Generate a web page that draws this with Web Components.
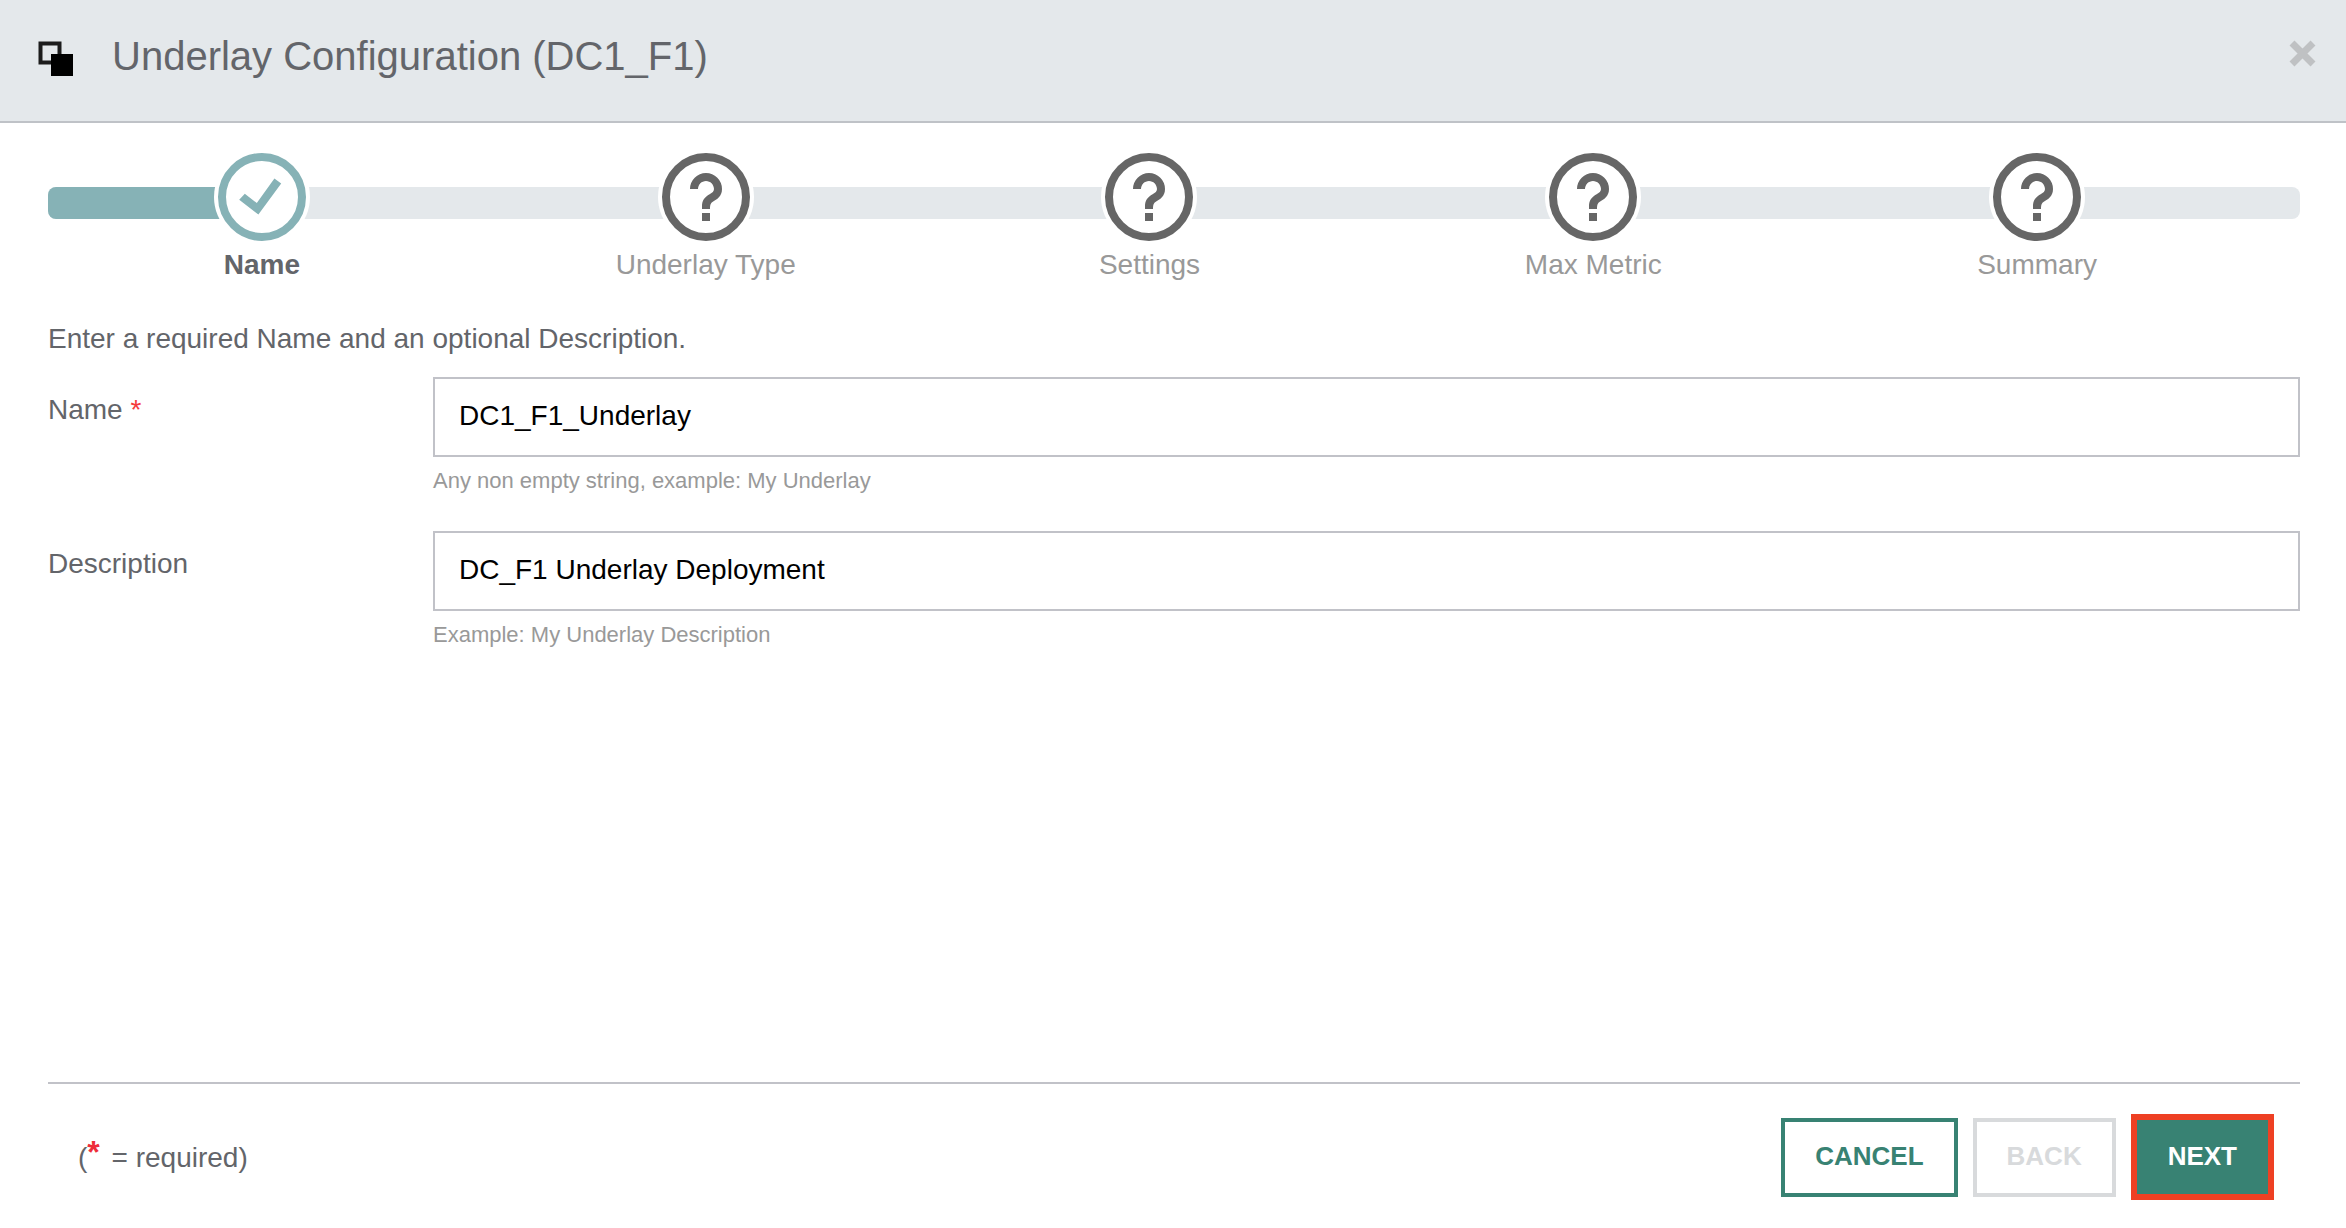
<!DOCTYPE html>
<html lang="en">
<head>
<meta charset="utf-8">
<title>Underlay Configuration</title>
<style>
html, body { margin: 0; height: 100%; }
body { background: #fff; color: #63656a; font-family: "Liberation Sans", Arial, sans-serif; font-size: 28px; line-height: 32px; }
</style>
</head>
<body>
<wizard-dialog></wizard-dialog>

<template id="wizard-dialog">
  <style>
    :host { display: flex; flex-direction: column; min-height: 100vh; box-sizing: border-box; }
    wizard-form { flex: 1; }
  </style>
  <dialog-header>Underlay Configuration (DC1_F1)</dialog-header>
  <wizard-steps>
    <wizard-step state="done">Name</wizard-step>
    <wizard-step>Underlay Type</wizard-step>
    <wizard-step>Settings</wizard-step>
    <wizard-step>Max Metric</wizard-step>
    <wizard-step>Summary</wizard-step>
  </wizard-steps>
  <wizard-form>
    <span slot="intro">Enter a required Name and an optional Description.</span>
    <form-field label="Name" value="DC1_F1_Underlay" required>Any non empty string, example: My Underlay</form-field>
    <form-field label="Description" value="DC_F1 Underlay Deployment">Example: My Underlay Description</form-field>
  </wizard-form>
  <dialog-footer>
    <action-button>CANCEL</action-button>
    <action-button disabled>BACK</action-button>
    <action-button primary>NEXT</action-button>
  </dialog-footer>
</template>

<template id="dialog-header">
  <style>
    :host { display: block; background: #e4e8eb; border-bottom: 2px solid #bfc2c7; }
    header { display: flex; align-items: flex-start; padding: 32px 30px 41px 38px; }
    .logo { width: 36px; height: 36px; margin: 9px 38px 0 0; }
    h1 { flex: 1; margin: 0; font-size: 40px; line-height: 48px; font-weight: 400; }
    button { margin: 8px 0 0; padding: 0; border: 0; background: none; width: 27px; height: 27px; cursor: pointer; }
    svg { display: block; }
  </style>
  <header>
    <svg class="logo" viewBox="0 0 36 36" aria-hidden="true">
      <rect x="2.500" y="2.500" width="19" height="19" fill="none" stroke="#1c1c1c" stroke-width="4"/>
      <rect x="13" y="13" width="22" height="22"/>
    </svg>
    <h1><slot></slot></h1>
    <button type="button" aria-label="Close"><svg width="27" height="27" viewBox="0 0 27 27"><path d="M3 3L24 24M24 3L3 24" stroke="#bfc1c3" stroke-width="7"/></svg></button>
  </header>
</template>

<template id="wizard-steps">
  <style>
    :host { display: block; padding: 30px 46px 0 48px; }
    .track { display: grid; }
    .bar, .steps { grid-area: 1 / 1; }
    .bar { height: 32px; margin-top: 34px; border-radius: 8px; background: #e4e8eb; overflow: hidden; }
    .fill { width: 9%; height: 100%; background: #86b2b6; }
    .steps { display: grid; grid-template-columns: repeat(5, 1fr); margin: 0 41px 0 -8px; }
  </style>
  <div class="track">
    <div class="bar"><div class="fill"></div></div>
    <div class="steps"><slot></slot></div>
  </div>
</template>

<template id="wizard-step">
  <style>
    :host { display: flex; flex-direction: column; align-items: center; color: #999; margin-top: -4px; }
    :host([state="done"]) { color: #63656a; font-weight: 700; }
    svg { width: 96px; height: 96px; color: #666; }
    :host([state="done"]) svg { color: #86b2b6; }
    .check, :host([state="done"]) .question { display: none; }
    :host([state="done"]) .check { display: inline; }
    .text { margin-top: 4px; }
  </style>
  <svg viewBox="0 0 24 24" aria-hidden="true">
    <circle cx="12" cy="12" r="12" fill="#fff"/>
    <circle cx="12" cy="12" r="10" fill="none" stroke="currentColor" stroke-width="2"/>
    <g class="question" fill="currentColor">
      <path d="M11 16h2v2h-2z"/>
      <path d="M8 10a4 4 0 0 1 8 0c0 1.900-1.300 2.600-2.300 3.200-.5.3-.7.7-.7 1.800h-2v-.7c0-1.500.7-2.300 1.900-3 .7-.4 1.100-.7 1.100-1.300 0-1.100-.9-2-2-2s-2 .9-2 2z"/>
    </g>
    <path class="check" d="M6.300 12.700L7.700 11.200L10.700 13.500L15.100 7.400L16.800 8.600L11.100 16.400z" fill="currentColor"/>
  </svg>
  <span class="text"><slot></slot></span>
</template>

<template id="wizard-form">
  <style>
    :host { display: block; padding: 42px 46px 0 48px; }
    p { margin: 0 0 22px; }
  </style>
  <p><slot name="intro"></slot></p>
  <slot></slot>
</template>

<template id="form-field">
  <style>
    :host { display: grid; grid-template-columns: 385px 1fr; margin-bottom: 34px; }
    label { padding-top: 17px; }
    .star { color: #f53b3b; }
    input { display: block; box-sizing: border-box; width: 100%; height: 80px; margin: 0; padding: 0 24px 2px; border: 2px solid #c1c2c8; border-radius: 0; background: #fff; color: #000; font: inherit; outline: 0; }
    .hint { margin-top: 8px; color: #999; font-size: 22px; line-height: 32px; }
  </style>
  <label for="box"><span class="name"></span><span class="star"> *</span></label>
  <div>
    <input id="box" type="text" aria-describedby="hint">
    <div class="hint" id="hint"><slot></slot></div>
  </div>
</template>

<template id="dialog-footer">
  <style>
    :host { display: block; padding: 0 46px 28px 48px; }
    footer { display: flex; align-items: center; border-top: 2px solid #c1c2c8; padding: 30px 26px 0 30px; }
    .note { flex: 1; padding-top: 2px; }
    .star { margin-right: 4px; color: #ee2d3b; font-size: 32px; line-height: 20px; font-weight: 700; vertical-align: 4px; }
    .actions { display: flex; align-items: center; gap: 15px; }
  </style>
  <footer>
    <div class="note">(<span class="star">*</span> = required)</div>
    <div class="actions"><slot></slot></div>
  </footer>
</template>

<template id="action-button">
  <style>
    :host { display: block; }
    button { display: block; box-sizing: border-box; height: 79px; margin: 0; padding: 0 30px 2px; border: 4px solid #388273; border-radius: 0; background: #fff; color: #388273; font: inherit; font-size: 26px; font-weight: 700; cursor: pointer; }
    :host([disabled]) button { border-color: #d8dadc; color: #d8dadc; cursor: default; }
    :host([primary]) button { height: 86px; border: 6px solid #ee4023; padding: 0 31px 2px; background: #388273; color: #fff; }
  </style>
  <button type="button"><slot></slot></button>
</template>

<script>
class TemplateElement extends HTMLElement {
  constructor() {
    super();
    const template = document.getElementById(this.localName);
    this.attachShadow({ mode: "open" }).append(template.content.cloneNode(true));
  }
}
class FormField extends TemplateElement {
  connectedCallback() {
    const root = this.shadowRoot;
    root.querySelector(".name").textContent = this.getAttribute("label");
    const input = root.querySelector("input");
    input.value = this.getAttribute("value") || "";
    input.required = this.hasAttribute("required");
    if (!input.required) root.querySelector(".star")?.remove();
  }
}
class ActionButton extends TemplateElement {
  connectedCallback() {
    this.shadowRoot.querySelector("button").disabled = this.hasAttribute("disabled");
  }
}
customElements.define("action-button", ActionButton);
customElements.define("form-field", FormField);
for (const name of ["dialog-header", "wizard-step", "wizard-steps", "wizard-form", "dialog-footer", "wizard-dialog"]) {
  customElements.define(name, class extends TemplateElement {});
}
</script>
</body>
</html>
